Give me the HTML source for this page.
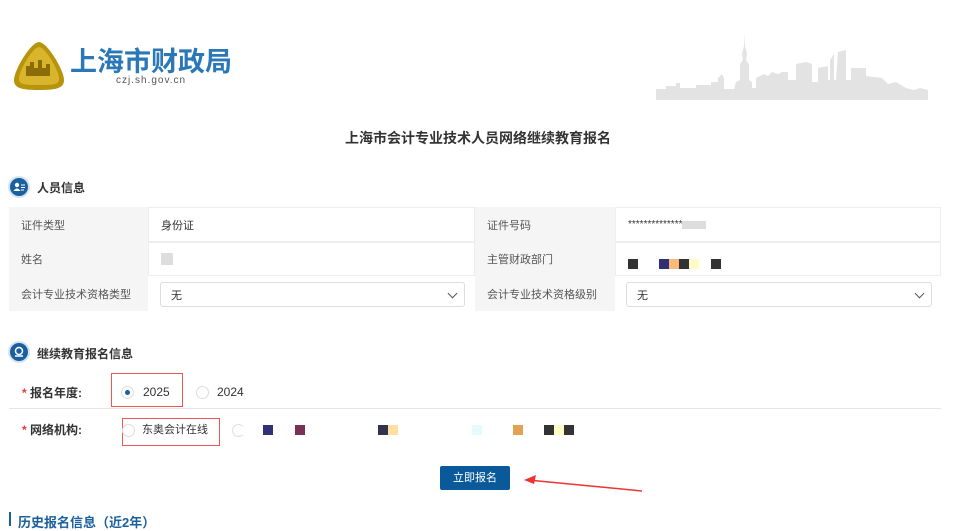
<!DOCTYPE html><html><head><meta charset="utf-8"><style>
body{margin:0;width:956px;height:525px;overflow:hidden;background:#fff;font-family:"Liberation Sans","Noto Sans CJK SC",sans-serif;color:#333;position:relative}
.a{position:absolute}
.t{font-size:12px}
.cell{position:absolute;box-sizing:border-box;font-size:11px;display:flex;align-items:center;padding-left:12px}
.lab{background:#f5f5f5;color:#555}
.val{background:#fff;border:1px solid #eee}
.sel{position:absolute;border:1px solid #ddd;border-radius:3px;background:#fff;font-size:11px;box-sizing:border-box;padding-left:10px;display:flex;align-items:center}
.chev{position:absolute;right:8px;top:7px;width:6px;height:6px;border-right:1px solid #555;border-bottom:1px solid #555;transform:rotate(45deg)}
.sq{position:absolute;width:10px;height:10px}
.rad{position:absolute;width:13px;height:13px;border:1px solid #ddd;border-radius:50%;box-sizing:border-box}
.ic{position:absolute;width:18px;height:18px;border-radius:50%;background:#1a5f9e;box-shadow:0 0 0 2px #d5e3f0}
</style></head><body>
<svg class="a" style="left:12px;top:40px" width="55" height="52" viewBox="0 0 55 52"><path d="M27 2 C35 2 52 30 52 40 C52 48 45 50 27 50 C9 50 2 48 2 40 C2 30 19 2 27 2Z" fill="#b8940c"/><path d="M27 7 C33 7 47 30 47 39 C47 45 40 45 27 45 C14 45 7 45 7 39 C7 30 21 7 27 7Z" fill="#d8b52a"/><path d="M14 36 V26 H18 V22 H22 V28 H26 V20 H30 V28 H34 V24 H38 V36Z" fill="#8a6c08"/></svg>
<div class="a" style="left:70px;top:40px;font-size:27px;font-weight:bold;color:#2a78b8;letter-spacing:0px">上海市财政局</div>
<div class="a" style="left:116px;top:75px;font-size:10px;color:#555;letter-spacing:1px">czj.sh.gov.cn</div>
<svg class="a" style="left:656px;top:34px" width="272" height="66" viewBox="0 0 272 66"><path fill="#e3e3e3" d="M0 60 L0 55 L10 55 L10 52 L20 52 L20 49 L24 49 L24 54 L40 54 L40 51 L55 51 L55 48 L62 48 L62 44 L66 40 L68 44 L68 55 L78 55 L80 48 L84 46 L84 30 L87 26 L86 20 L88 12 L88 0 L89 12 L91 20 L90 26 L93 30 L93 46 L96 48 L96 54 L100 54 L100 44 L108 40 L112 42 L116 38 L122 40 L126 38 L132 38 L132 46 L140 46 L140 30 L150 28 L156 30 L156 48 L162 48 L162 34 L172 32 L172 46 L174 46 L174 26 L178 20 L178 46 L180 46 L182 18 L190 16 L190 46 L195 46 L195 34 L210 34 L210 42 L226 44 L232 50 L240 48 L250 54 L258 56 L264 54 L272 56 L272 66 L0 66Z"/></svg>
<div class="a" style="left:0;width:956px;top:128px;text-align:center;font-size:14px;font-weight:bold;color:#333">上海市会计专业技术人员网络继续教育报名</div>
<div class="ic" style="left:10px;top:178px"><svg width="18" height="18"><circle cx="7" cy="7" r="2.2" fill="#fff"/><path d="M3.5 13 Q7 8 10.5 13Z" fill="#fff"/><path d="M11 7h4M11 9.5h4M11 12h3" stroke="#fff" stroke-width="1"/></svg></div>
<div class="a" style="left:37px;top:179px;font-size:12px;font-weight:bold">人员信息</div>
<div class="cell lab" style="left:9px;top:207px;width:139px;height:35px">证件类型</div>
<div class="cell val" style="left:148px;top:207px;width:327px;height:35px">身份证</div>
<div class="cell lab" style="left:475px;top:207px;width:140px;height:35px">证件号码</div>
<div class="cell val" style="left:615px;top:207px;width:326px;height:35px;font-size:10px">**************<span style="display:inline-block;width:24px;height:8px;background:#ddd"></span></div>
<div class="cell lab" style="left:9px;top:242px;width:139px;height:34px">姓名</div>
<div class="cell val" style="left:148px;top:242px;width:327px;height:34px"><span style="display:inline-block;width:12px;height:12px;background:#ddd"></span></div>
<div class="cell lab" style="left:475px;top:242px;width:140px;height:34px">主管财政部门</div>
<div class="cell val" style="left:615px;top:242px;width:326px;height:34px"></div>
<div class="sq" style="left:628px;top:259px;background:#333"></div>
<div class="sq" style="left:659px;top:259px;background:#2f3075"></div>
<div class="sq" style="left:669px;top:259px;background:#f9b97a"></div>
<div class="sq" style="left:679px;top:259px;background:#333"></div>
<div class="sq" style="left:689px;top:259px;background:#fffbc8"></div>
<div class="sq" style="left:711px;top:259px;background:#333"></div>
<div class="cell lab" style="left:9px;top:276px;width:139px;height:35px">会计专业技术资格类型</div>
<div class="a" style="left:148px;top:276px;width:327px;height:35px;background:#fff"></div>
<div class="sel" style="left:160px;top:282px;width:305px;height:25px">无<span class="chev"></span></div>
<div class="cell lab" style="left:475px;top:276px;width:140px;height:35px">会计专业技术资格级别</div>
<div class="sel" style="left:626px;top:282px;width:306px;height:25px">无<span class="chev"></span></div>
<div class="ic" style="left:10px;top:343px"><svg width="18" height="18"><circle cx="9" cy="8" r="3.5" fill="none" stroke="#fff" stroke-width="1.5"/><path d="M5 13h8" stroke="#fff" stroke-width="1.5"/></svg></div>
<div class="a" style="left:37px;top:345px;font-size:12px;font-weight:bold">继续教育报名信息</div>
<div class="a t" style="left:22px;top:384px;font-weight:bold"><span style="color:#e33">* </span>报名年度:</div>
<div class="a" style="left:111px;top:373px;width:72px;height:34px;border:1.5px solid #e55;box-sizing:border-box"></div>
<div class="rad" style="left:121px;top:386px"><span style="position:absolute;left:3px;top:3px;width:5px;height:5px;border-radius:50%;background:#1a5f9e"></span></div>
<div class="a t" style="left:143px;top:385px">2025</div>
<div class="rad" style="left:196px;top:386px"></div>
<div class="a t" style="left:217px;top:385px">2024</div>
<div class="a" style="left:9px;top:408px;width:932px;height:1px;background:#e5e5e5"></div>
<div class="a t" style="left:22px;top:421px;font-weight:bold"><span style="color:#e33">* </span>网络机构:</div>
<div class="a" style="left:122px;top:418px;width:98px;height:28px;border:1.5px solid #e55;box-sizing:border-box"></div>
<div class="rad" style="left:122px;top:424px"></div>
<div class="a" style="left:142px;top:421px;font-size:11px">东奥会计在线</div>
<div class="rad" style="left:232px;top:424px;border-right-color:#fff"></div>
<div class="sq" style="left:263px;top:425px;background:#2f3075"></div>
<div class="sq" style="left:295px;top:425px;background:#7a2f55"></div>
<div class="sq" style="left:378px;top:425px;background:#33334f"></div>
<div class="sq" style="left:388px;top:425px;background:#ffe0a0"></div>
<div class="sq" style="left:472px;top:425px;background:#e4fbfd"></div>
<div class="sq" style="left:513px;top:425px;background:#e3a155"></div>
<div class="sq" style="left:544px;top:425px;background:#333"></div>
<div class="sq" style="left:554px;top:425px;background:#fffbc4"></div>
<div class="sq" style="left:564px;top:425px;background:#333"></div>
<div class="a" style="left:440px;top:466px;width:70px;height:24px;background:#0a5a9b;border-radius:2px;color:#fff;font-size:11px;text-align:center;line-height:24px">立即报名</div>
<svg class="a" style="left:520px;top:474px" width="125" height="22"><path d="M122 17 L8 6" stroke="#e33" stroke-width="1.5"/><path d="M4 6 L16 1 L14 10Z" fill="#e33"/></svg>
<div class="a" style="left:9px;top:512px;width:2px;height:14px;background:#1a5f9e"></div>
<div class="a" style="left:18px;top:512px;font-size:13px;font-weight:bold;color:#1a5f9e">历史报名信息（近2年）</div>
</body></html>
